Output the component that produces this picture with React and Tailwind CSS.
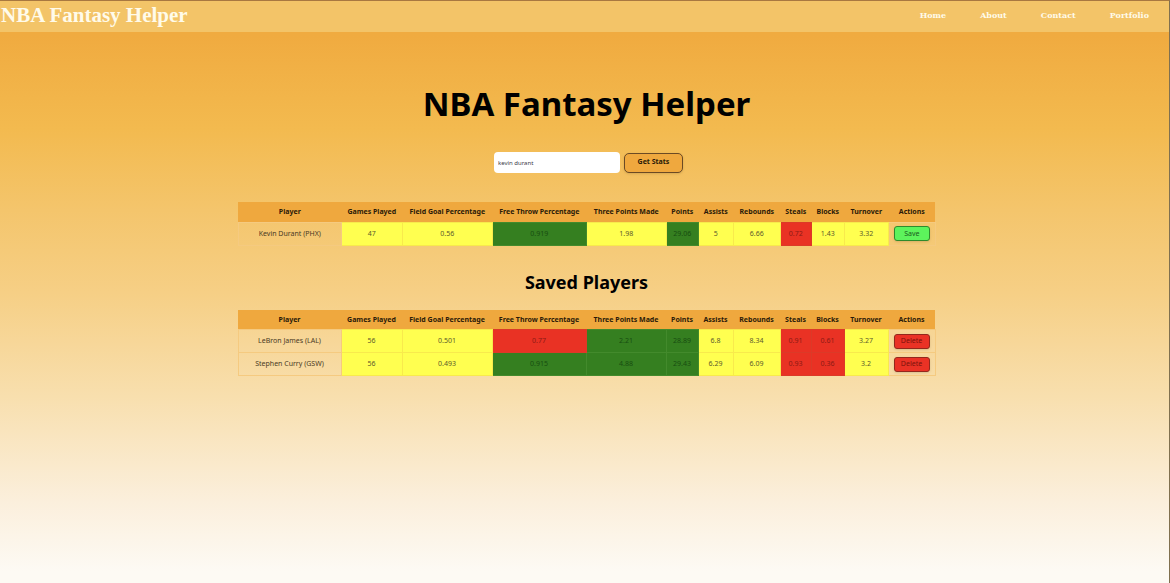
const columns = [
  ['Player', 'w-[103px]'],
  ['Games Played', 'w-[61px]'],
  ['Field Goal Percentage', 'w-[90px]'],
  ['Free Throw Percentage', 'w-[94px]'],
  ['Three Points Made', 'w-[80px]'],
  ['Points', 'w-[32px]'],
  ['Assists', 'w-[35px]'],
  ['Rebounds', 'w-[47px]'],
  ['Steals', 'w-[31px]'],
  ['Blocks', 'w-[33px]'],
  ['Turnover', 'w-[44px]'],
  ['Actions', 'w-[47px]'],
];

const tones = {
  y: 'bg-[#ffff50] border-[#f8ea4c] text-[#5c5a2c]',
  g: 'bg-[#357f20] border-[#438a2c] text-[#174d10]',
  r: 'bg-[#e93224] border-[#dc3a28] text-[#8c1a14]',
};

const searched = [
  {
    name: 'Kevin Durant (PHX)',
    stats: [['47', 'y'], ['0.56', 'y'], ['0.919', 'g'], ['1.98', 'y'], ['29.06', 'g'], ['5', 'y'], ['6.66', 'y'], ['0.72', 'r'], ['1.43', 'y'], ['3.32', 'y']],
  },
];

const saved = [
  {
    name: 'LeBron James (LAL)',
    stats: [['56', 'y'], ['0.501', 'y'], ['0.77', 'r'], ['2.21', 'g'], ['28.89', 'g'], ['6.8', 'y'], ['8.34', 'y'], ['0.91', 'r'], ['0.61', 'r'], ['3.27', 'y']],
  },
  {
    name: 'Stephen Curry (GSW)',
    stats: [['56', 'y'], ['0.493', 'y'], ['0.915', 'g'], ['4.88', 'g'], ['29.43', 'g'], ['6.29', 'y'], ['6.09', 'y'], ['0.93', 'r'], ['0.36', 'r'], ['3.2', 'y']],
  },
];

function StatsTable({ label, rows, action, actionClass }) {
  return (
    <table aria-label={label} className="w-full table-fixed border-collapse text-center text-[7px] leading-3">
      <colgroup>
        {columns.map(([title, width]) => (
          <col key={title} className={width} />
        ))}
      </colgroup>
      <thead>
        <tr className="h-5 bg-[#efa83e] text-[#2b1a08]">
          {columns.map(([title]) => (
            <th key={title} scope="col" className="whitespace-nowrap p-0 pt-px font-bold">
              {title}
            </th>
          ))}
        </tr>
      </thead>
      <tbody>
        {rows.map((row) => (
          <tr key={row.name} className="h-[23px]">
            <td className="whitespace-nowrap border border-[#f5ca80] p-0 text-[#4a3a24]">{row.name}</td>
            {row.stats.map(([value, tone], i) => (
              <td key={i} className={`border p-0 ${tones[tone]}`}>
                {value}
              </td>
            ))}
            <td className="border border-[#f5ca80] p-0">
              <button
                type="button"
                className={`mx-auto flex h-[15px] w-9 items-center justify-center rounded-[3px] border shadow-sm ${actionClass}`}
              >
                {action}
              </button>
            </td>
          </tr>
        ))}
      </tbody>
    </table>
  );
}

export default function App() {
  return (
    <div className="min-h-screen border-r border-t border-r-[#80704f] border-t-[#a87840] bg-[linear-gradient(to_bottom,#f0ab40_6%,#f3ba4f_22%,#f4c56c_36%,#f6cf85_50%,#f8dfae_68%,#fbefdc_86%,#fdfaf4_98%)] font-['Noto_Sans','Open_Sans',sans-serif] text-black">
      <header className="flex h-[31px] items-center justify-between bg-[#f3c468] pb-1 pl-px pr-5 font-['DejaVu_Serif',serif] font-bold text-[#fffbea]">
        <span className="font-['Liberation_Serif',serif] text-[21px] leading-6">NBA Fantasy Helper</span>
        <nav aria-label="Main" className="flex gap-[34px] text-[8px] leading-3">
          <a href="#home">Home</a>
          <a href="#about">About</a>
          <a href="#contact">Contact</a>
          <a href="#portfolio">Portfolio</a>
        </nav>
      </header>
      <main className="mx-auto flex w-[60%] flex-col items-center pl-1 pt-12">
        <h1 className="text-[33px] font-bold leading-12">NBA Fantasy Helper</h1>
        <form className="mt-6 flex items-center gap-1 pl-1" onSubmit={(e) => e.preventDefault()}>
          <input
            type="text"
            aria-label="Player name"
            defaultValue="kevin durant"
            className="h-[21px] w-[126px] rounded-[4px] bg-white px-1 text-[6px] text-[#3a3a4a] outline-none"
          />
          <button
            type="submit"
            className="h-5 w-[59px] rounded-[5px] border border-[#6b4a24] bg-[#efa83e] text-[7px] font-bold text-[#2b1a08] shadow-sm"
          >
            Get Stats
          </button>
        </form>
        <div className="mt-[29px] w-full">
          <StatsTable
            label="Search results"
            rows={searched}
            action="Save"
            actionClass="border-[#2f8a2c] bg-[#5df35c] text-[#1c5a1c]"
          />
        </div>
        <h2 className="mb-[14px] mt-[22px] text-[18px] font-bold leading-7">Saved Players</h2>
        <StatsTable
          label="Saved players"
          rows={saved}
          action="Delete"
          actionClass="border-[#94281c] bg-[#ea3225] text-[#7a120c]"
        />
      </main>
    </div>
  );
}
